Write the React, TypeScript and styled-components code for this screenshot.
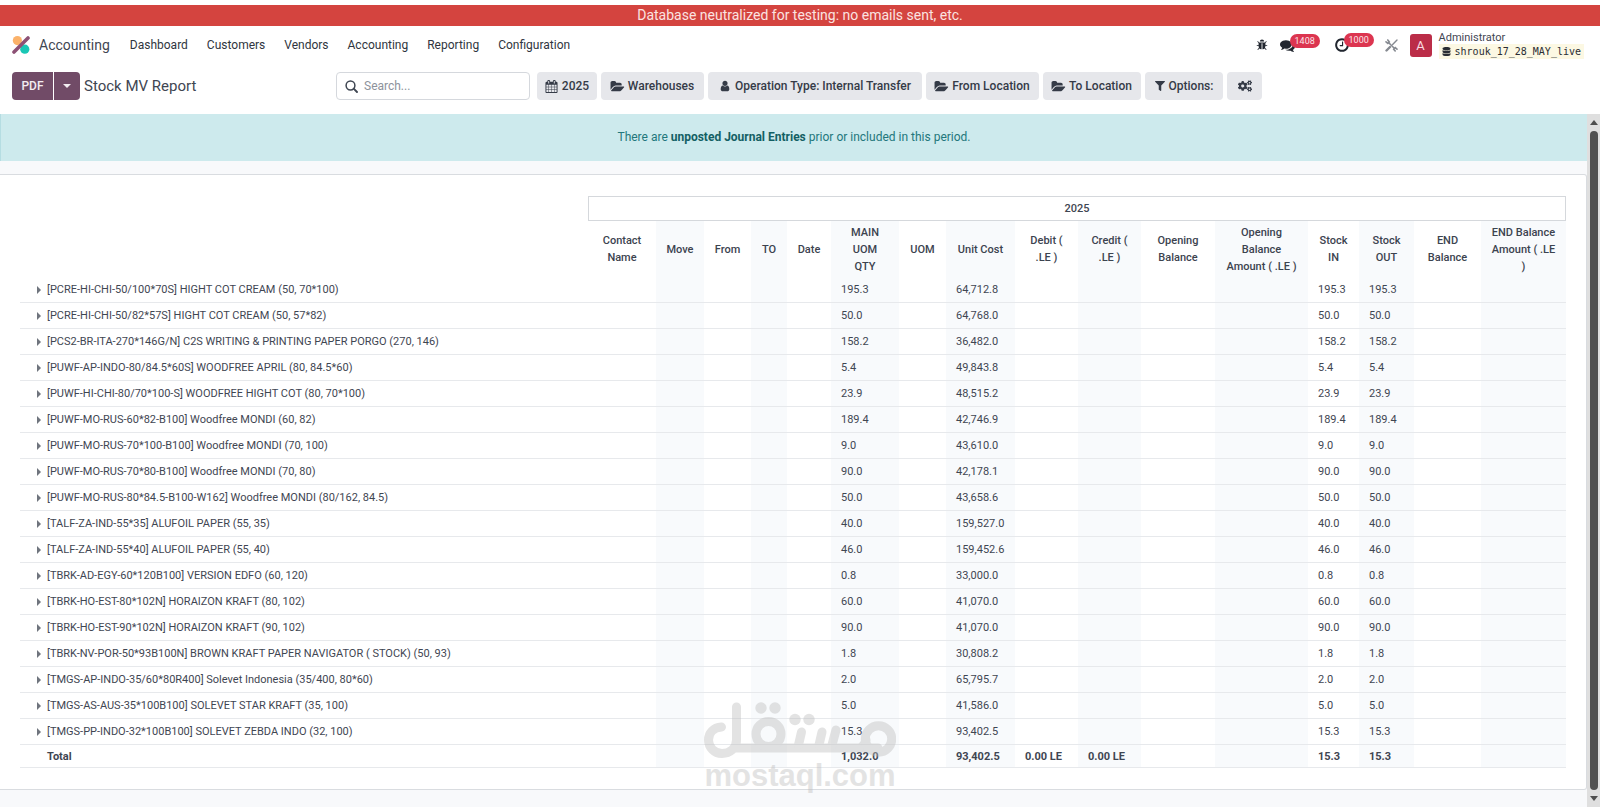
import React from "react";
import styled, { createGlobalStyle, css } from "styled-components";
import { FaCogs, FaDatabase, FaFilter } from "react-icons/fa";

const GlobalStyle = createGlobalStyle`
  *, *::before, *::after { box-sizing: border-box; }
  body {
    margin: 0;
    background: #fff;
    color: #3f4652;
    font-family: Roboto, "Open Sans", sans-serif;
    font-size: 12px;
    line-height: 17px;
  }
  button, input { font: inherit; color: inherit; }
`;

const Page = styled.div`
  position: relative;
  display: flex;
  flex-direction: column;
  min-height: 100vh;
  padding-top: 5px;
`;

const TestBanner = styled.div`
  background: #d4443f;
  color: #fbe3e1;
  font-size: 14px;
  line-height: 21px;
  text-align: center;
`;

const Navbar = styled.header`
  display: flex;
  align-items: center;
  height: 38px;
  padding: 0 16px 0 12px;
`;

const Brand = styled.a`
  display: flex;
  align-items: center;
  gap: 9px;
  margin-right: 20px;
  color: #3f4652;
  font-size: 14px;
  text-decoration: none;
`;

const Menu = styled.nav`
  display: flex;
  gap: 19px;
`;

const MenuLink = styled.a`
  color: #2f3540;
  text-decoration: none;
`;

const Systray = styled.div`
  display: flex;
  align-items: center;
  margin-left: auto;
`;

const TrayButton = styled.button<{ $gap: number }>`
  position: relative;
  display: flex;
  margin: 0 ${(p) => p.$gap}px 0 0;
  padding: 0;
  border: 0;
  background: none;
  color: #21262f;
`;

const Badge = styled.span`
  position: absolute;
  top: -4px;
  left: 10px;
  padding: 0 5px;
  border-radius: 7px;
  background: #dc3550;
  color: #fbe4e8;
  font-size: 9px;
  line-height: 14px;
`;

const Avatar = styled.span`
  width: 22px;
  margin-right: 7px;
  border-radius: 3px;
  background: #bb2d48;
  color: #f8dde2;
  font-size: 13px;
  line-height: 23px;
  text-align: center;
`;

const Account = styled.div`
  display: flex;
  flex-direction: column;
  font-size: 11px;
  line-height: 13px;
`;

const DbName = styled.span`
  display: flex;
  align-items: center;
  gap: 4px;
  padding: 1px 3px;
  background: #fcf8e3;
  color: #2a2d33;
  font-family: "DejaVu Sans Mono", monospace;
  font-size: 10px;
`;

const ControlPanel = styled.div`
  display: flex;
  align-items: flex-start;
  padding: 8px 12px 14px;
`;

const PanelTitle = styled.div`
  display: flex;
  align-items: center;
  flex: 0 0 324px;
`;

const PdfButton = styled.button<{ $side: "left" | "right" }>`
  display: flex;
  align-items: center;
  justify-content: center;
  height: 28px;
  padding: 0;
  border: 0;
  background: #714b67;
  color: #f3ecf1;
  font-weight: 500;
  ${(p) =>
    p.$side === "left"
      ? css`
          width: 41px;
          border-radius: 4px 0 0 4px;
        `
      : css`
          width: 26px;
          margin-left: 1px;
          border-radius: 0 4px 4px 0;
        `}
`;

const CaretDown = styled.i`
  border: solid transparent;
  border-width: 4px 4px 0;
  border-top-color: #f3ecf1;
`;

const Title = styled.h1`
  margin: 0 0 0 4px;
  font-size: 15px;
  font-weight: 400;
`;

const SearchBox = styled.label`
  display: flex;
  align-items: center;
  gap: 6px;
  width: 194px;
  height: 28px;
  margin-right: 7px;
  padding: 0 8px;
  border: 1px solid #d5d8dd;
  border-radius: 4px;
`;

const SearchInput = styled.input`
  flex: 1;
  min-width: 0;
  padding: 0;
  border: 0;
  outline: 0;
  background: none;
  &::placeholder { color: #8d929b; opacity: 1; }
`;

const Filters = styled.div`
  display: flex;
  gap: 4px;
`;

const FilterButton = styled.button<{ $width: number }>`
  display: flex;
  align-items: center;
  justify-content: center;
  gap: 4px;
  min-width: ${(p) => p.$width}px;
  height: 28px;
  padding: 0 6px;
  border: 0;
  border-radius: 4px;
  background: #e6e7eb;
  color: #353b47;
  font-weight: 500;
  white-space: nowrap;
`;

const Viewport = styled.div`
  display: flex;
  flex: 1;
`;

const Content = styled.main`
  flex: 1;
  min-width: 0;
  background: #f8f9fb;
`;

const Notice = styled.div`
  margin-bottom: 13px;
  padding: 15px;
  border-left: 1px solid #b5dde2;
  background: #cdeaed;
  color: #23777c;
  text-align: center;
  b { color: #135f64; font-weight: 700; }
`;

const Card = styled.section`
  padding: 21px 20px;
  border: solid #d9dce0;
  border-width: 1px 1px 1px 0;
  border-radius: 0 3px 3px 0;
  background: #fff;
`;

const Report = styled.table`
  width: 100%;
  border-collapse: separate;
  border-spacing: 0;
  table-layout: fixed;
  font-size: 11px;
`;

const YearCell = styled.th`
  height: 25px;
  padding: 0;
  border: 1px solid #d5d8dc;
  font-weight: 500;
`;

const HeadCell = styled.th<{ $shade: boolean }>`
  height: 56px;
  padding: 0;
  background: ${(p) => (p.$shade ? "#f8fafc" : "transparent")};
  color: #3c434f;
  font-weight: 500;
  white-space: pre-line;
`;

const Row = styled.tr<{ $total?: boolean }>`
  height: ${(p) => (p.$total ? 23 : 26)}px;
  font-weight: ${(p) => (p.$total ? 700 : 400)};
`;

const cell = css`
  border-bottom: 1px solid #e7e9ec;
  text-align: left;
  white-space: nowrap;
`;

const NameCell = styled.th`
  ${cell}
  padding: 0 0 0 17px;
  font-weight: inherit;
`;

const NameLine = styled.span`
  display: flex;
  align-items: center;
`;

const Expander = styled.button`
  width: 10px;
  height: 8px;
  padding: 0;
  border: 0;
  background: none;
  &::before {
    content: "";
    display: block;
    width: 0;
    border: solid transparent;
    border-width: 4px 0 4px 4px;
    border-left-color: #6f747d;
  }
`;

const Indent = styled.span`
  width: 10px;
`;

const ValueCell = styled.td<{ $shade: boolean }>`
  ${cell}
  padding: 0 0 0 10px;
  background: ${(p) => (p.$shade ? "#f8fafc" : "transparent")};
`;

const ScrollTrack = styled.div`
  display: flex;
  flex-direction: column;
  align-items: center;
  justify-content: space-between;
  gap: 6px;
  width: 13px;
  padding: 6px 0;
  background: #dfdfdf;
`;

const ScrollArrow = styled.i<{ $down?: boolean }>`
  border: solid transparent;
  ${(p) =>
    p.$down
      ? css`border-width: 5px 4px 0; border-top-color: #4e4e4e;`
      : css`border-width: 0 4px 5px; border-bottom-color: #4e4e4e;`}
`;

const ScrollThumb = styled.div`
  flex: 1;
  width: 8px;
  border-radius: 4px;
  background: #515151;
`;

const Watermark = styled.div`
  position: absolute;
  bottom: 16px;
  left: 50%;
  display: flex;
  flex-direction: column;
  align-items: center;
  transform: translateX(-50%);
  color: #bdbdbd;
  font-family: "Liberation Sans", Arial, sans-serif;
  font-size: 31px;
  font-weight: 700;
  line-height: 31px;
  opacity: 0.42;
  pointer-events: none;
`;

const paths = {
  bug: "M1696 960q0 26-19 45t-45 19h-224q0 171-67 290l208 209q19 19 19 45t-19 45q-18 19-45 19t-45-19l-198-197q-5 5-15 13t-42 28.500-65 36.500-82 29-97 13v-896h-128v896q-51 0-101.500-13.500t-87-33-66-39-43.500-32.500l-15-14-183 207q-20 21-48 21-24 0-43-16-19-18-20.500-44.500t15.500-46.500l202-227q-58-114-58-274h-224q-26 0-45-19t-19-45 19-45 45-19h224v-294l-173-173q-19-19-19-45t19-45 45-19 45 19l173 173h844l173-173q19-19 45-19t45 19 19 45-19 45l-173 173v294h224q26 0 45 19t19 45zm-480-576h-640q0-133 93.500-226.500t226.500-93.500 226.500 93.500 93.500 226.500z",
  comments: "M1408 768q0 139-94 257t-256.500 186.500-353.500 68.500q-86 0-176-16-124 88-278 128-36 9-86 16h-3q-11 0-20.500-8t-11.500-21q-1-3-1-6.500t.5-6.500 2-6l2.500-5 3.500-5.500 4-5 4.500-5 4-4.500q5-6 23-25t26-29.500 22.500-29 25-38.500 20.500-44q-124-72-195-177t-71-224q0-139 94-257t256.500-186.500 353.500-68.500 353.500 68.500 256.500 186.500 94 257zm384 256q0 120-71 224.500t-195 176.500q10 24 20.500 44t25 38.500 22.500 29 26 29.500 23 25q1 1 4 4.500t4.500 5 4 5 3.500 5.500l2.500 5 2 6 .5 6.500-1 6.500q-3 14-13 22t-22 7q-50-7-86-16-154-40-278-128-90 16-176 16-271 0-472-132 58 4 88 4 161 0 309-45t264-129q125-92 192-212t67-254q0-77-23-152 129 71 204 178t75 230z",
  clock: "M1024 544v448q0 14-9 23t-23 9h-320q-14 0-23-9t-9-23v-64q0-14 9-23t23-9h224v-352q0-14 9-23t23-9h64q14 0 23 9t9 23zm416 352q0-148-73-273t-198-198-273-73-273 73-198 198-73 273 73 273 198 198 273 73 273-73 198-198 73-273zm224 0q0 209-103 385.500t-279.500 279.500-385.500 103-385.500-103-279.500-279.500-103-385.500 103-385.500 279.500-279.500 385.500-103 385.500 103 279.500 279.500 103 385.500z",
  calendar: "M192 1664h288v-288h-288v288zm352 0h320v-288h-320v288zm-352-352h288v-320h-288v320zm352 0h320v-320h-320v320zm-352-384h288v-288h-288v288zm736 736h320v-288h-320v288zm-384-736h320v-288h-320v288zm768 736h288v-288h-288v288zm-384-352h320v-320h-320v320zm-352-864v-288q0-13-9.500-22.500t-22.500-9.500h-64q-13 0-22.500 9.500t-9.500 22.500v288q0 13 9.500 22.500t22.500 9.500h64q13 0 22.500-9.500t9.500-22.500zm736 864h288v-320h-288v320zm-384-384h320v-288h-320v288zm384 0h288v-288h-288v288zm32-480v-288q0-13-9.500-22.500t-22.500-9.500h-64q-13 0-22.500 9.500t-9.500 22.500v288q0 13 9.500 22.500t22.500 9.500h64q13 0 22.500-9.500t9.500-22.500zm384-64v1280q0 52-38 90t-90 38h-1408q-52 0-90-38t-38-90v-1280q0-52 38-90t90-38h128v-96q0-66 47-113t113-47h64q66 0 113 47t47 113v96h384v-96q0-66 47-113t113-47h64q66 0 113 47t47 113v96h128q52 0 90 38t38 90z",
  folder: "M1815 952q0 31-31 66l-336 396q-43 51-120.500 86.500t-143.500 35.500h-1088q-34 0-60.500-13t-26.500-43q0-31 31-66l336-396q43-51 120.500-86.500t143.500-35.500h1088q34 0 60.500 13t26.500 43zm-343-344v160h-832q-94 0-197 47.500t-164 119.500l-337 396-5 6q0-4-.5-12.500t-.5-12.500v-960q0-92 66-158t158-66h320q92 0 158 66t66 158v32h544q92 0 158 66t66 158z",
  user: "M1536 1399q0 109-62.500 187t-150.500 78h-854q-88 0-150.500-78t-62.500-187q0-85 8.500-160.500t31.500-152 58.500-131 94-89 134.500-34.500q131 128 313 128t313-128q76 0 134.500 34.500t94 89 58.500 131 31.500 152 8.500 160.500zm-256-887q0 159-112.500 271.500t-271.500 112.500-271.500-112.500-112.500-271.500 112.500-271.500 271.500-112.500 271.500 112.500 112.500 271.500z",
};

function Glyph({ name, size = 13 }: { name: keyof typeof paths; size?: number }) {
  return (
    <svg width={size} height={size} viewBox="0 0 1792 1792" fill="currentColor" overflow="visible" aria-hidden>
      <path d={paths[name]} />
    </svg>
  );
}

function AppLogo() {
  return (
    <svg width="18" height="18" viewBox="0 0 18 18" aria-hidden>
      <circle cx="5.400" cy="4.600" r="4.600" fill="#fbb26a" />
      <circle cx="12.800" cy="13.200" r="4.600" fill="#1ac7b5" />
      <path d="M2 16 16 2" stroke="#8d5175" strokeWidth="3.6" strokeLinecap="round" />
    </svg>
  );
}

function ToolsIcon() {
  return (
    <svg width="13" height="13" viewBox="0 0 13 13" fill="none" stroke="#868a91" strokeLinecap="round" aria-hidden>
      <path d="M4 4 9 9" strokeWidth="1.600" />
      <path d="M1 2.800 2.900 4.400 4.300 3 2.800 1" strokeWidth="1.600" />
      <path d="M10.200 12 8.700 10.200 10.200 8.700 12 10.200" strokeWidth="1.600" />
      <path d="M12 1 7.600 5.400" strokeWidth="1.400" />
      <path d="M5 8 1.500 11.500" strokeWidth="2.400" />
    </svg>
  );
}

function SearchIcon() {
  return (
    <svg width="13" height="13" viewBox="0 0 13 13" fill="none" stroke="#3f4652" aria-hidden>
      <circle cx="5.500" cy="5.500" r="4.400" strokeWidth="1.500" />
      <path d="M8.700 8.700 12 12" strokeWidth="1.900" strokeLinecap="round" />
    </svg>
  );
}

function MostaqlLogo() {
  return (
    <svg width="192" height="58" viewBox="0 0 192 58" fill="none" stroke="currentColor" strokeWidth="9" strokeLinecap="round" aria-hidden>
      <path d="M17.500 25C9.500 25.500 4.500 31 4.500 38S10 51.500 18 51.500 32.500 46 32.500 38V5M31 46H174M156 46a18 13 0 0 0 6-8" />
      <circle cx="64.500" cy="32" r="12.500" />
      <circle cx="174.500" cy="37" r="13.200" />
      <path d="M97.500 30 94.500 43M118 30 115 43M132 28 128 43" />
      <g fill="currentColor" stroke="none">
        <circle cx="57" cy="6" r="5.700" />
        <circle cx="71" cy="6" r="5.700" />
        <circle cx="91" cy="17.500" r="5.700" />
        <circle cx="105" cy="17.500" r="5.700" />
      </g>
    </svg>
  );
}

const menu = ["Dashboard", "Customers", "Vendors", "Accounting", "Reporting", "Configuration"];

const filters = [
  { label: "2025", width: 60, icon: <Glyph name="calendar" /> },
  { label: "Warehouses", width: 103, icon: <Glyph name="folder" /> },
  { label: "Operation Type: Internal Transfer", width: 214, icon: <Glyph name="user" size={12} /> },
  { label: "From Location", width: 113, icon: <Glyph name="folder" /> },
  { label: "To Location", width: 98, icon: <Glyph name="folder" /> },
  { label: "Options:", width: 78, icon: <FaFilter size={10} /> },
  { label: "", width: 35, icon: <FaCogs size={14} /> },
];

const columns: { label: string; width: number }[] = [
  { label: "Contact\nName", width: 68 },
  { label: "Move", width: 48 },
  { label: "From", width: 47 },
  { label: "TO", width: 36 },
  { label: "Date", width: 44 },
  { label: "MAIN\nUOM\nQTY", width: 68 },
  { label: "UOM", width: 47 },
  { label: "Unit Cost", width: 69 },
  { label: "Debit (\n.LE )", width: 63 },
  { label: "Credit (\n.LE )", width: 63 },
  { label: "Opening\nBalance", width: 74 },
  { label: "Opening\nBalance\nAmount ( .LE )", width: 93 },
  { label: "Stock\nIN", width: 51 },
  { label: "Stock\nOUT", width: 55 },
  { label: "END\nBalance", width: 67 },
  { label: "END Balance\nAmount ( .LE\n)", width: 85 },
];

const products: [string, string, string][] = [
  ["[PCRE-HI-CHI-50/100*70S] HIGHT COT CREAM (50, 70*100)", "195.3", "64,712.8"],
  ["[PCRE-HI-CHI-50/82*57S] HIGHT COT CREAM (50, 57*82)", "50.0", "64,768.0"],
  ["[PCS2-BR-ITA-270*146G/N] C2S WRITING & PRINTING PAPER PORGO (270, 146)", "158.2", "36,482.0"],
  ["[PUWF-AP-INDO-80/84.5*60S] WOODFREE APRIL (80, 84.5*60)", "5.4", "49,843.8"],
  ["[PUWF-HI-CHI-80/70*100-S] WOODFREE HIGHT COT (80, 70*100)", "23.9", "48,515.2"],
  ["[PUWF-MO-RUS-60*82-B100] Woodfree MONDI (60, 82)", "189.4", "42,746.9"],
  ["[PUWF-MO-RUS-70*100-B100] Woodfree MONDI (70, 100)", "9.0", "43,610.0"],
  ["[PUWF-MO-RUS-70*80-B100] Woodfree MONDI (70, 80)", "90.0", "42,178.1"],
  ["[PUWF-MO-RUS-80*84.5-B100-W162] Woodfree MONDI (80/162, 84.5)", "50.0", "43,658.6"],
  ["[TALF-ZA-IND-55*35] ALUFOIL PAPER (55, 35)", "40.0", "159,527.0"],
  ["[TALF-ZA-IND-55*40] ALUFOIL PAPER (55, 40)", "46.0", "159,452.6"],
  ["[TBRK-AD-EGY-60*120B100] VERSION EDFO (60, 120)", "0.8", "33,000.0"],
  ["[TBRK-HO-EST-80*102N] HORAIZON KRAFT (80, 102)", "60.0", "41,070.0"],
  ["[TBRK-HO-EST-90*102N] HORAIZON KRAFT (90, 102)", "90.0", "41,070.0"],
  ["[TBRK-NV-POR-50*93B100N] BROWN KRAFT PAPER NAVIGATOR ( STOCK) (50, 93)", "1.8", "30,808.2"],
  ["[TMGS-AP-INDO-35/60*80R400] Solevet Indonesia (35/400, 80*60)", "2.0", "65,795.7"],
  ["[TMGS-AS-AUS-35*100B100] SOLEVET STAR KRAFT (35, 100)", "5.0", "41,586.0"],
  ["[TMGS-PP-INDO-32*100B100] SOLEVET ZEBDA INDO (32, 100)", "15.3", "93,402.5"],
];

function Values({ values }: { values: Record<number, string> }) {
  return (
    <>
      {columns.map((_, i) => (
        <ValueCell key={i} $shade={i % 2 === 1}>
          {values[i]}
        </ValueCell>
      ))}
    </>
  );
}

export default function App() {
  return (
    <Page>
      <GlobalStyle />
      <TestBanner>Database neutralized for testing: no emails sent, etc.</TestBanner>
      <Navbar>
        <Brand href="#">
          <AppLogo />
          Accounting
        </Brand>
        <Menu>
          {menu.map((m) => (
            <MenuLink key={m} href="#">{m}</MenuLink>
          ))}
        </Menu>
        <Systray>
          <TrayButton $gap={12} aria-label="Debug"><Glyph name="bug" size={12} /></TrayButton>
          <TrayButton $gap={39} aria-label="Messages">
            <Glyph name="comments" size={15} />
            <Badge>1408</Badge>
          </TrayButton>
          <TrayButton $gap={35} aria-label="Activities">
            <Glyph name="clock" size={16} />
            <Badge>1000</Badge>
          </TrayButton>
          <TrayButton $gap={12} aria-label="Tools"><ToolsIcon /></TrayButton>
          <Avatar>A</Avatar>
          <Account>
            Administrator
            <DbName><FaDatabase size={9} />shrouk_17_28_MAY_live</DbName>
          </Account>
        </Systray>
      </Navbar>
      <ControlPanel>
        <PanelTitle>
          <PdfButton $side="left">PDF</PdfButton>
          <PdfButton $side="right" aria-label="More export formats"><CaretDown /></PdfButton>
          <Title>Stock MV Report</Title>
        </PanelTitle>
        <SearchBox>
          <SearchIcon />
          <SearchInput type="text" placeholder="Search..." aria-label="Search" />
        </SearchBox>
        <Filters>
          {filters.map((f) => (
            <FilterButton key={f.label} $width={f.width} aria-label={f.label || "Settings"}>
              {f.icon}
              {f.label}
            </FilterButton>
          ))}
        </Filters>
      </ControlPanel>
      <Viewport>
        <Content>
          <Notice>
            There are <b>unposted Journal Entries</b> prior or included in this period.
          </Notice>
          <Card>
            <Report>
              <colgroup>
                <col />
                {columns.map((c) => (
                  <col key={c.label} width={c.width} />
                ))}
              </colgroup>
              <thead>
                <tr>
                  <td />
                  <YearCell colSpan={16}>2025</YearCell>
                </tr>
                <tr>
                  <td />
                  {columns.map((c, i) => (
                    <HeadCell key={c.label} $shade={i % 2 === 1}>{c.label}</HeadCell>
                  ))}
                </tr>
              </thead>
              <tbody>
                {products.map(([name, qty, cost]) => (
                  <Row key={name}>
                    <NameCell scope="row">
                      <NameLine>
                        <Expander aria-label="Unfold" />
                        {name}
                      </NameLine>
                    </NameCell>
                    <Values values={{ 5: qty, 7: cost, 12: qty, 13: qty }} />
                  </Row>
                ))}
                <Row $total>
                  <NameCell scope="row">
                    <NameLine>
                      <Indent />
                      Total
                    </NameLine>
                  </NameCell>
                  <Values values={{ 5: "1,032.0", 7: "93,402.5", 8: "0.00 LE", 9: "0.00 LE", 12: "15.3", 13: "15.3" }} />
                </Row>
              </tbody>
            </Report>
          </Card>
        </Content>
        <ScrollTrack>
          <ScrollArrow />
          <ScrollThumb />
          <ScrollArrow $down />
        </ScrollTrack>
      </Viewport>
      <Watermark>
        <MostaqlLogo />
        mostaql.com
      </Watermark>
    </Page>
  );
}
